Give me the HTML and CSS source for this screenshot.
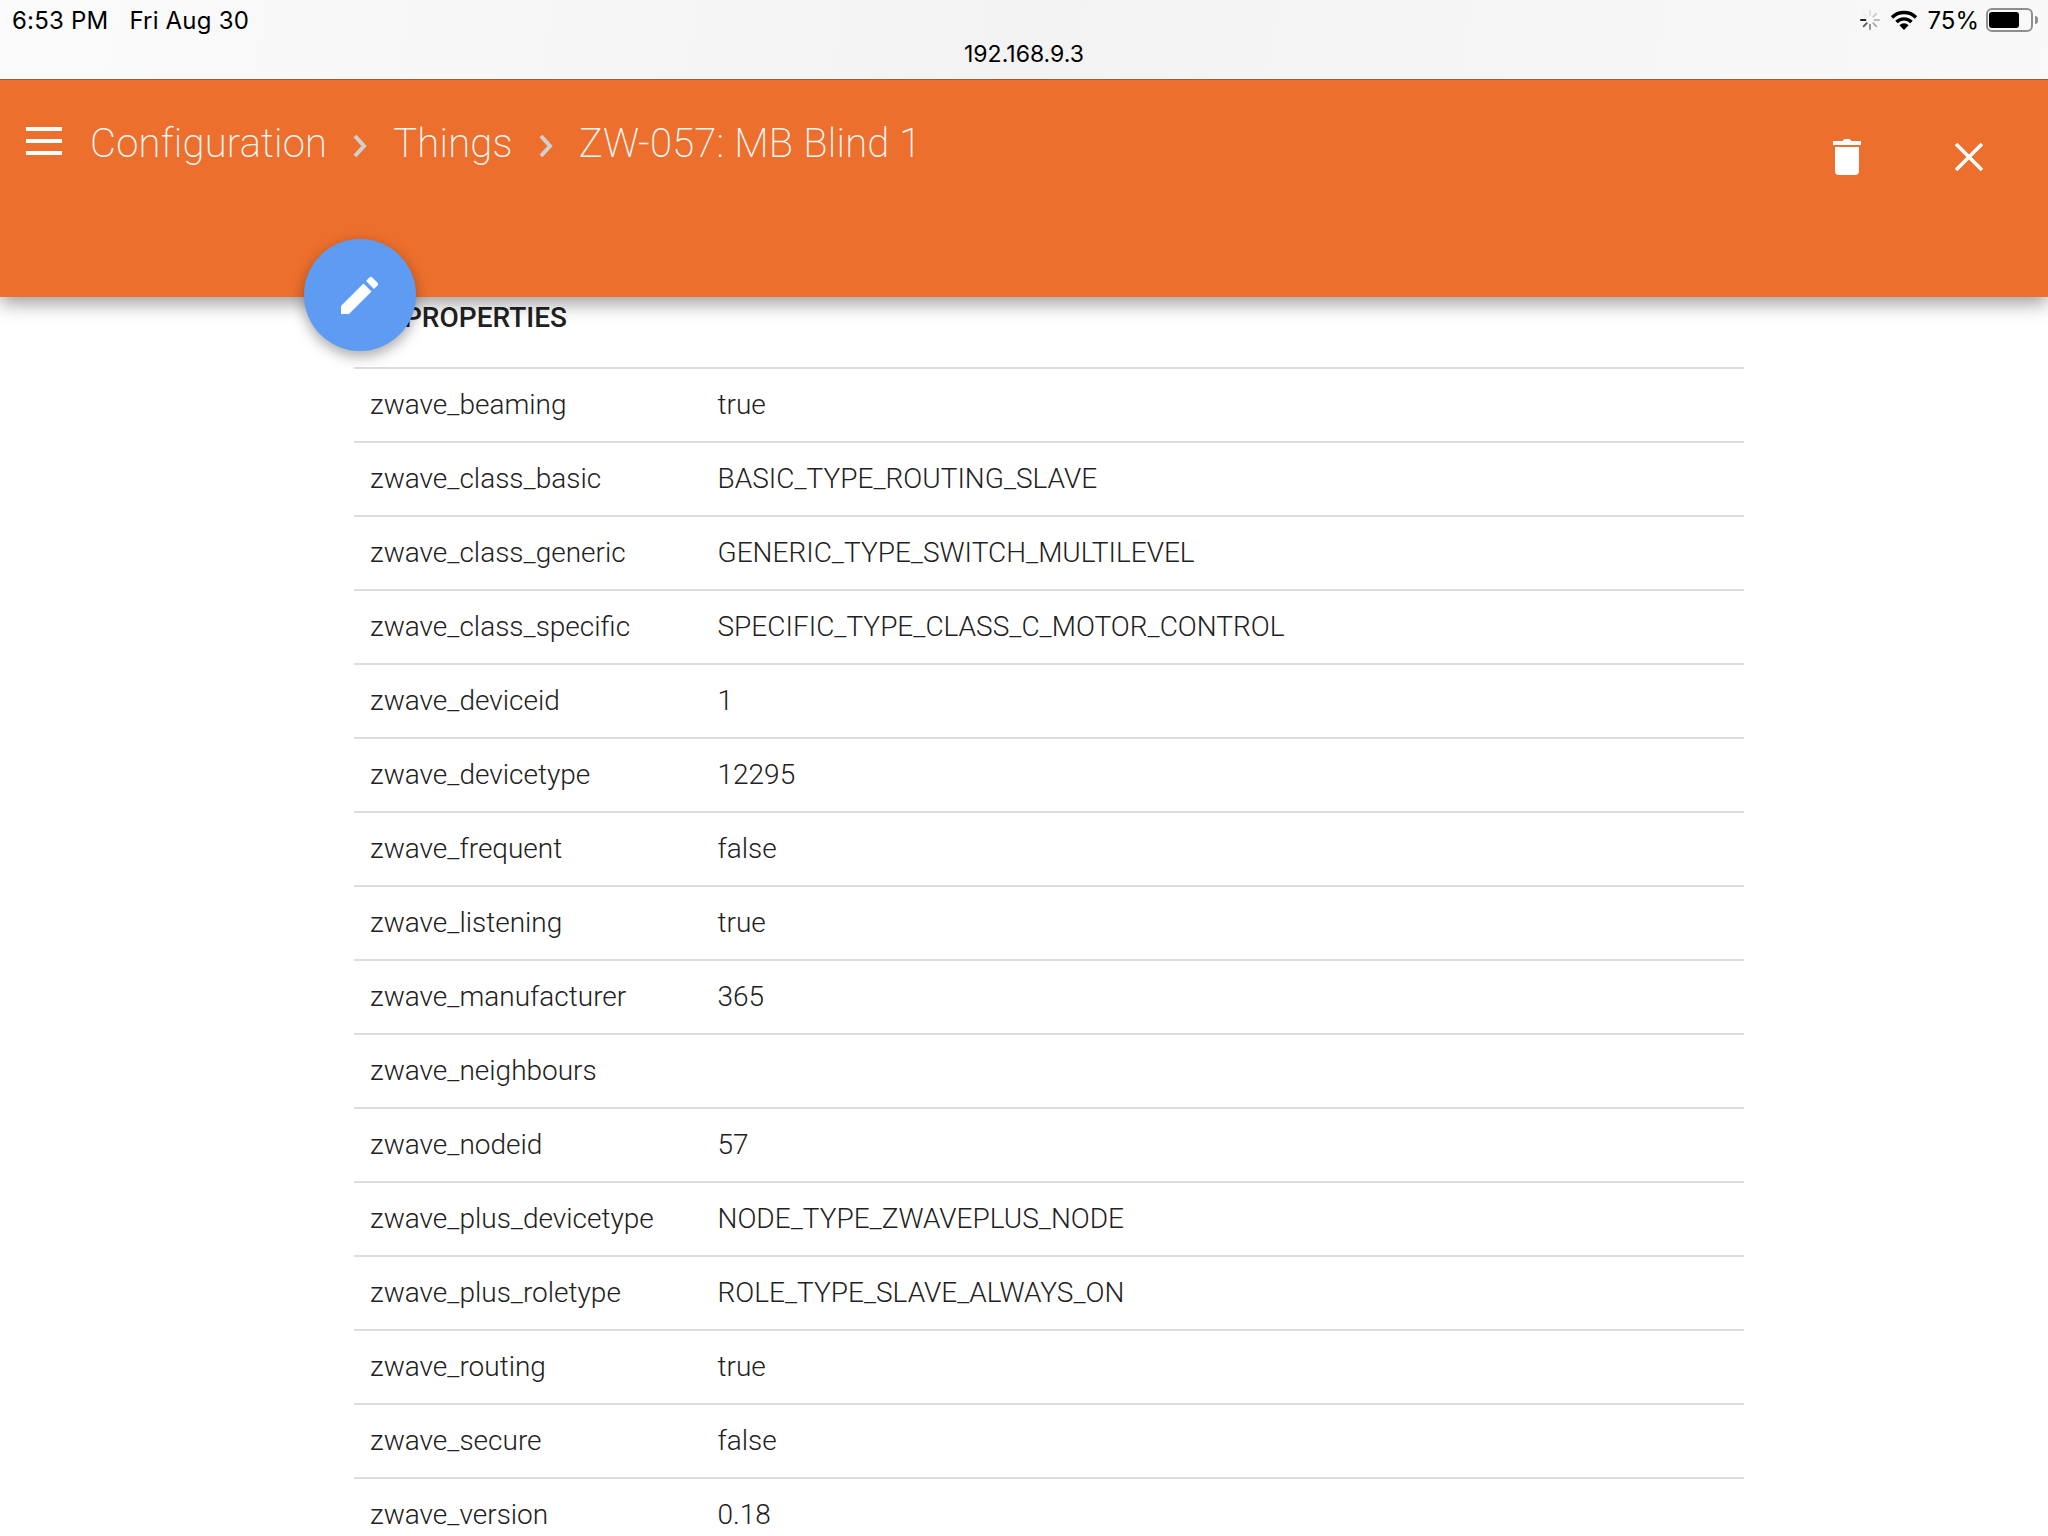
FILE: index.html
```html
<!DOCTYPE html>
<html lang="en">
<head>
    <meta charset="UTF-8">
    <meta name="viewport" content="width=device-width, initial-scale=1.0">
    <title>ZW-057: MB Blind 1</title>
    <link rel="stylesheet" href="styles.css">
</head>
<body>
    <!-- iOS status bar -->
    <div class="status-bar">
        <div class="status-row">
            <div class="status-left"><span>6:53 PM</span><span>Fri Aug 30</span></div>
            <div class="status-right">
                <svg class="spinner" width="20" height="20" viewBox="0 0 22 22" stroke-width="2" stroke-linecap="round">
                    <path d="M11 1v5" stroke="#ddd"/>
                    <path d="M18 4l-3.500 3.500" stroke="#ccc"/>
                    <path d="M21 11h-5" stroke="#bbb"/>
                    <path d="M18 18l-3.500-3.500" stroke="#aaa"/>
                    <path d="M11 21v-5" stroke="#888"/>
                    <path d="M4 18l3.500-3.500" stroke="#555"/>
                    <path d="M1 11h5" stroke="#222"/>
                    <path d="M4 4l3.500 3.500" stroke="#eee"/>
                </svg>
                <svg class="wifi" width="28" height="20" viewBox="0 0 28 20" fill="none" stroke="#000" stroke-width="3.400">
                    <path d="M2 7.500a17 17 0 0 1 24 0"/>
                    <path d="M6.500 12a10.600 10.600 0 0 1 15 0"/>
                    <path d="M14 20l-4.600-4.800a6.500 6.500 0 0 1 9.200 0z" fill="#000" stroke="none"/>
                </svg>
                <span class="battery-text">75%</span>
                <div class="battery"><div class="battery-fill"></div></div>
                <div class="battery-tip"></div>
            </div>
        </div>
        <div class="url">192.168.9.3</div>
    </div>

    <!-- Orange title bar -->
    <div class="toolbar">
        <svg class="menu-icon" width="36" height="28" viewBox="0 0 36 28" fill="#fff">
            <rect x="0" y="0" width="36" height="4"/>
            <rect x="0" y="12" width="36" height="4"/>
            <rect x="0" y="24" width="36" height="4"/>
        </svg>
        <div class="crumbs">
            <span>Configuration</span>
            <svg class="crumb-arrow" width="14" height="24" viewBox="0 0 14 24" fill="none" stroke="#d0d0d0" stroke-width="4"><path d="M2 2l9 10-9 10"/></svg>
            <span>Things</span>
            <svg class="crumb-arrow" width="14" height="24" viewBox="0 0 14 24" fill="none" stroke="#d0d0d0" stroke-width="4"><path d="M2 2l9 10-9 10"/></svg>
            <span>ZW-057: MB Blind 1</span>
        </div>
        <div class="toolbar-actions">
            <svg width="28" height="36" viewBox="0 0 28 36" fill="#fff">
                <path d="M0 2h9.500l2-2h5l2 2H28v4H0z"/>
                <path d="M2 8h24v24a4 4 0 0 1-4 4H6a4 4 0 0 1-4-4z"/>
            </svg>
            <svg width="28" height="28" viewBox="0 0 28 28" stroke="#fff" stroke-width="3.600"><path d="M1 1l26 26M27 1L1 27"/></svg>
        </div>
    </div>

    <button class="fab">
        <svg width="38" height="38" viewBox="0 0 38 38" fill="#fff">
            <path d="M0 30L22.500 7.500l8 8L8 38H0z"/>
            <path d="M25 5l3.500-3.500a2 2 0 0 1 2.800 0l5.200 5.200a2 2 0 0 1 0 2.800L33 13z"/>
        </svg>
    </button>

    <!-- Properties table -->
    <div class="content">
        <h3 class="section-title">PROPERTIES</h3>
        <div class="prop-list">
            <div class="prop"><span class="prop-name">zwave_beaming</span><span>true</span></div>
            <div class="prop"><span class="prop-name">zwave_class_basic</span><span>BASIC_TYPE_ROUTING_SLAVE</span></div>
            <div class="prop"><span class="prop-name">zwave_class_generic</span><span>GENERIC_TYPE_SWITCH_MULTILEVEL</span></div>
            <div class="prop"><span class="prop-name">zwave_class_specific</span><span>SPECIFIC_TYPE_CLASS_C_MOTOR_CONTROL</span></div>
            <div class="prop"><span class="prop-name">zwave_deviceid</span><span>1</span></div>
            <div class="prop"><span class="prop-name">zwave_devicetype</span><span>12295</span></div>
            <div class="prop"><span class="prop-name">zwave_frequent</span><span>false</span></div>
            <div class="prop"><span class="prop-name">zwave_listening</span><span>true</span></div>
            <div class="prop"><span class="prop-name">zwave_manufacturer</span><span>365</span></div>
            <div class="prop"><span class="prop-name">zwave_neighbours</span><span></span></div>
            <div class="prop"><span class="prop-name">zwave_nodeid</span><span>57</span></div>
            <div class="prop"><span class="prop-name">zwave_plus_devicetype</span><span>NODE_TYPE_ZWAVEPLUS_NODE</span></div>
            <div class="prop"><span class="prop-name">zwave_plus_roletype</span><span>ROLE_TYPE_SLAVE_ALWAYS_ON</span></div>
            <div class="prop"><span class="prop-name">zwave_routing</span><span>true</span></div>
            <div class="prop"><span class="prop-name">zwave_secure</span><span>false</span></div>
            <div class="prop"><span class="prop-name">zwave_version</span><span>0.18</span></div>
        </div>
    </div>
</body>
</html>
```

FILE: styles.css
```css
html, body {
    height: 1536px;
    overflow: hidden;
}
body {
    margin: 0;
    font-family: Roboto, sans-serif;
    background-color: #FFFFFF;
    color: #212121;
    position: relative;
}
.status-bar {
    height: 79px;
    background: linear-gradient(100deg, #FBFBFB, #F3F3F3 50%, #F9F9F9);
    border-bottom: 1px solid #A85A30;
    font-family: Inter, sans-serif;
    color: #000;
    position: relative;
    z-index: 2;
}
.status-row {
    display: flex;
    justify-content: space-between;
    align-items: center;
    height: 40px;
    padding: 0 10px 0 12px;
}
.status-left {
    display: flex;
    gap: 21px;
    font-size: 24px;
    letter-spacing: 0.2px;
}
.status-right {
    display: flex;
    align-items: center;
}
.spinner { margin-right: 10px; }
.wifi { margin-right: 9px; }
.battery-text {
    font-size: 24px;
    margin-right: 7px;
}
.battery {
    width: 43px;
    height: 20px;
    border: 2px solid #8E8E8E;
    border-radius: 6px;
}
.battery-fill {
    width: 30px;
    height: 16px;
    margin: 2px 1px;
    background-color: #000;
    border-radius: 3px;
}
.battery-tip {
    width: 3px;
    height: 8px;
    background-color: #8E8E8E;
    border-radius: 0 3px 3px 0;
    margin-left: 2px;
}
.url {
    text-align: center;
    font-size: 23px;
    line-height: 28px;
}
.toolbar {
    height: 217px;
    background-color: #EC6F2D;
    box-shadow: 0 6px 18px rgba(0,0,0,0.4);
    display: flex;
    align-items: flex-start;
    position: relative;
    z-index: 1;
    color: #FFFFFF;
}
.menu-icon {
    margin: 47px 26px 0 26px;
}
.crumbs {
    display: flex;
    align-items: center;
    gap: 26px;
    font-size: 40px;
    font-weight: 200;
    letter-spacing: 0.2px;
    height: 50px;
    margin-top: 38px;
    margin-left: 2px;
    color: #F6F6F6;
}
.crumb-arrow { margin-top: 6px; }
.toolbar-actions {
    margin-left: auto;
    display: flex;
    align-items: center;
    gap: 94px;
    margin-top: 59px;
    margin-right: 65px;
}
.fab {
    position: absolute;
    left: 304px;
    top: 239px;
    width: 112px;
    height: 112px;
    border: none;
    border-radius: 50%;
    background-color: #5E9CF4;
    box-shadow: 0 5px 14px rgba(0,0,0,0.35);
    z-index: 2;
    display: flex;
    align-items: center;
    justify-content: center;
}
.content {
    width: 1390px;
    margin-left: 354px;
}
.section-title {
    font-size: 28px;
    font-weight: 500;
    margin: 0;
    height: 70px;
    padding-left: 50px;
    line-height: 42px;
    box-sizing: border-box;
    color: #212121;
}
.prop-list {
    border-top: 2px solid #DDDDDD;
}
.prop {
    display: flex;
    align-items: center;
    border-bottom: 2px solid #DDDDDD;
    padding: 0 0 2px 16px;
    box-sizing: border-box;
    height: 74px;
    font-size: 28px;
    font-weight: 300;
    color: #212121;
}
.prop-name {
    width: 347.500px;
}
```
